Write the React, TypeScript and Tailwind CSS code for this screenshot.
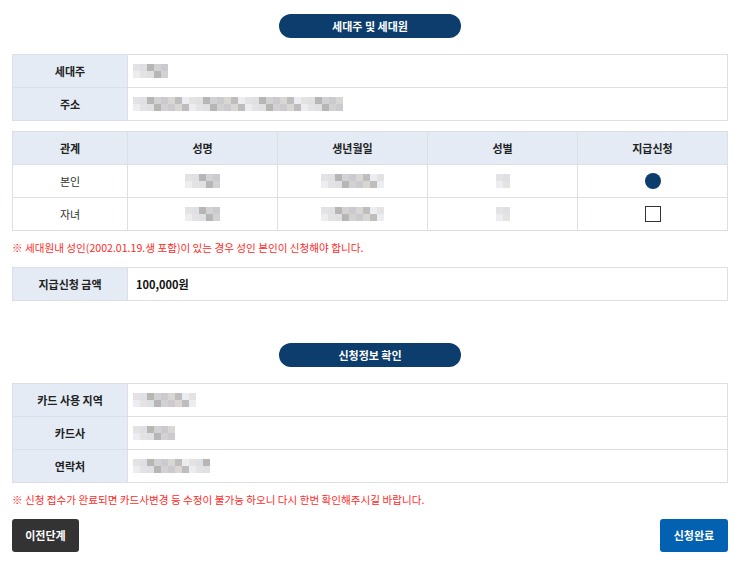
const font = { fontFamily: '"Noto Sans CJK KR", "Noto Sans", sans-serif' };

const grays = ["#dcd9d9", "#c4c2c6", "#aca7a9", "#d3d6dc", "#bbb9be", "#e6e8ec", "#a19d9d", "#cdcac6"];

function Blur({ cells, rows = 2 }: { cells: number; rows?: number }) {
  return (
    <div className="flex flex-col blur-[0.5px] opacity-75">
      {Array.from({ length: rows }).map((_, r) => (
        <div key={r} className="flex">
          {Array.from({ length: cells }).map((_, c) => (
            <div
              key={c}
              className="h-[7px] w-[7px]"
              style={{ background: grays[(c * 3 + r * 5) % grays.length] }}
            />
          ))}
        </div>
      ))}
    </div>
  );
}

function Pill({ children }: { children: string }) {
  return (
    <div className="flex justify-center">
      <div className="flex h-6 w-[182px] items-center justify-center rounded-full bg-[#0c3d6c] text-[11px] font-bold text-white">
        {children}
      </div>
    </div>
  );
}

function InfoRow({ label, children, last }: { label: string; children: React.ReactNode; last?: boolean }) {
  return (
    <div className={`flex ${last ? "h-[32px]" : "h-[33px] border-b border-[#dcdfe6]"}`}>
      <div className="flex w-[115px] items-center justify-center border-r border-[#dcdfe6] bg-[#e4ebf4] text-[11px] font-bold text-[#222]">
        {label}
      </div>
      <div className="flex flex-1 items-center px-[5px]">{children}</div>
    </div>
  );
}

const cols = "grid grid-cols-[115px_150px_150px_150px_1fr]";

export default function App() {
  return (
    <div className="w-[750px] bg-white pt-[14px] pr-[22px] pb-8 pl-3 text-[#333]" style={font}>
      <Pill>세대주 및 세대원</Pill>

      <div className="mt-4 border border-[#dcdfe6]">
        <InfoRow label="세대주">
          <Blur cells={5} />
        </InfoRow>
        <InfoRow label="주소" last>
          <Blur cells={30} />
        </InfoRow>
      </div>

      <div className="mt-[10px] border border-[#dcdfe6] text-[11px]">
        <div className={`${cols} h-[33px] border-b border-[#dcdfe6] bg-[#e4ebf4] font-bold text-[#222]`}>
          {["관계", "성명", "생년월일", "성별", "지급신청"].map((h, i) => (
            <div key={h} className={`flex items-center justify-center ${i < 4 ? "border-r border-[#dcdfe6]" : ""}`}>
              {h}
            </div>
          ))}
        </div>
        {[
          { rel: "본인", checked: true },
          { rel: "자녀", checked: false },
        ].map((r, i) => (
          <div key={r.rel} className={`${cols} ${i === 0 ? "h-[33px] border-b border-[#dcdfe6]" : "h-[32px]"}`}>
            <div className="flex items-center justify-center border-r border-[#dcdfe6]">{r.rel}</div>
            <div className="flex items-center justify-center border-r border-[#dcdfe6]">
              <Blur cells={5} />
            </div>
            <div className="flex items-center justify-center border-r border-[#dcdfe6]">
              <Blur cells={9} />
            </div>
            <div className="flex items-center justify-center border-r border-[#dcdfe6]">
              <Blur cells={2} />
            </div>
            <div className="flex items-center justify-center">
              {r.checked ? (
                <div className="h-4 w-4 rounded-full bg-[#0c3d6c]" />
              ) : (
                <div className="h-4 w-4 border border-[#333] bg-white" />
              )}
            </div>
          </div>
        ))}
      </div>

      <p className="mt-[9px] text-[10.6px] leading-4 text-[#ff2a1f]">
        ※ 세대원내 성인(2002.01.19.생 포함)이 있는 경우 성인 본인이 신청해야 합니다.
      </p>

      <div className="mt-[11px] border border-[#dcdfe6]">
        <InfoRow label="지급신청 금액" last>
          <span className="pl-[3px] text-[11px] font-bold text-[#111]">100,000원</span>
        </InfoRow>
      </div>

      <div className="mt-[42px]">
        <Pill>신청정보 확인</Pill>
      </div>

      <div className="mt-4 border border-[#dcdfe6]">
        <InfoRow label="카드 사용 지역">
          <Blur cells={9} />
        </InfoRow>
        <InfoRow label="카드사">
          <Blur cells={6} />
        </InfoRow>
        <InfoRow label="연락처" last>
          <Blur cells={11} />
        </InfoRow>
      </div>

      <p className="mt-[9px] text-[10.6px] leading-4 text-[#ff2a1f]">
        ※ 신청 접수가 완료되면 카드사변경 등 수정이 불가능 하오니 다시 한번 확인해주시길 바랍니다.
      </p>

      <div className="mt-[11px] flex justify-between">
        <button className="h-[33px] w-[67px] rounded-[3px] bg-[#333] text-[11px] font-bold text-white">이전단계</button>
        <button className="h-[33px] w-[68px] rounded-[3px] bg-[#0261b0] text-[11px] font-bold text-white">신청완료</button>
      </div>
    </div>
  );
}
